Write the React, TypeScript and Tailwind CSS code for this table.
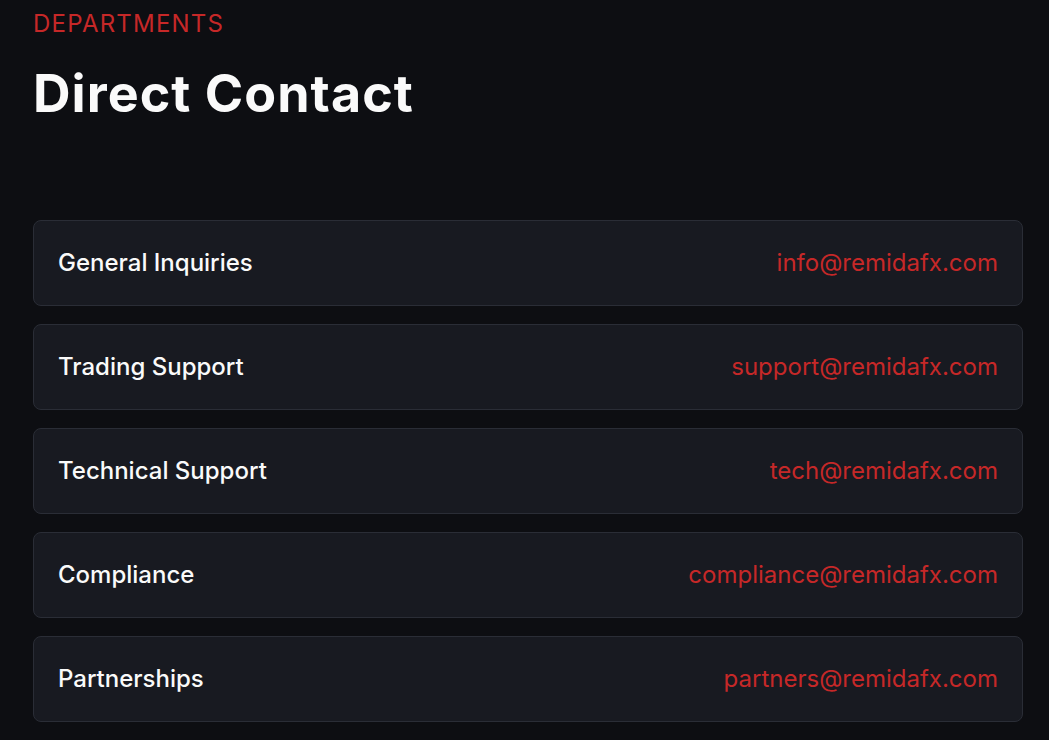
const departments = [
  { name: "General Inquiries", email: "info@remidafx.com" },
  { name: "Trading Support", email: "support@remidafx.com" },
  { name: "Technical Support", email: "tech@remidafx.com" },
  { name: "Compliance", email: "compliance@remidafx.com" },
  { name: "Partnerships", email: "partners@remidafx.com" },
];

export default function App() {
  return (
    <div className="min-h-screen bg-[#0d0e12] pl-[33px] pr-[26px] pt-[8px] font-['Inter',sans-serif]">
      <p className="text-[24px] leading-[32px] tracking-[0.05em] text-[#c62828]">
        DEPARTMENTS
      </p>
      <h2 className="mt-[26px] text-[52px] leading-[56px] font-bold tracking-[0.02em] text-[#fafafa]">
        Direct Contact
      </h2>

      <div className="mt-[98px] flex flex-col gap-[18px]">
        {departments.map((d) => (
          <div
            key={d.name}
            className="flex h-[86px] items-center justify-between rounded-lg border border-[#2a2d36] bg-[#181a21] px-6"
          >
            <span className="text-[24px] font-medium text-[#fafafa]">
              {d.name}
            </span>
            <a
              href={`mailto:${d.email}`}
              className="text-[24px] text-[#c62828]"
            >
              {d.email}
            </a>
          </div>
        ))}
      </div>
    </div>
  );
}
